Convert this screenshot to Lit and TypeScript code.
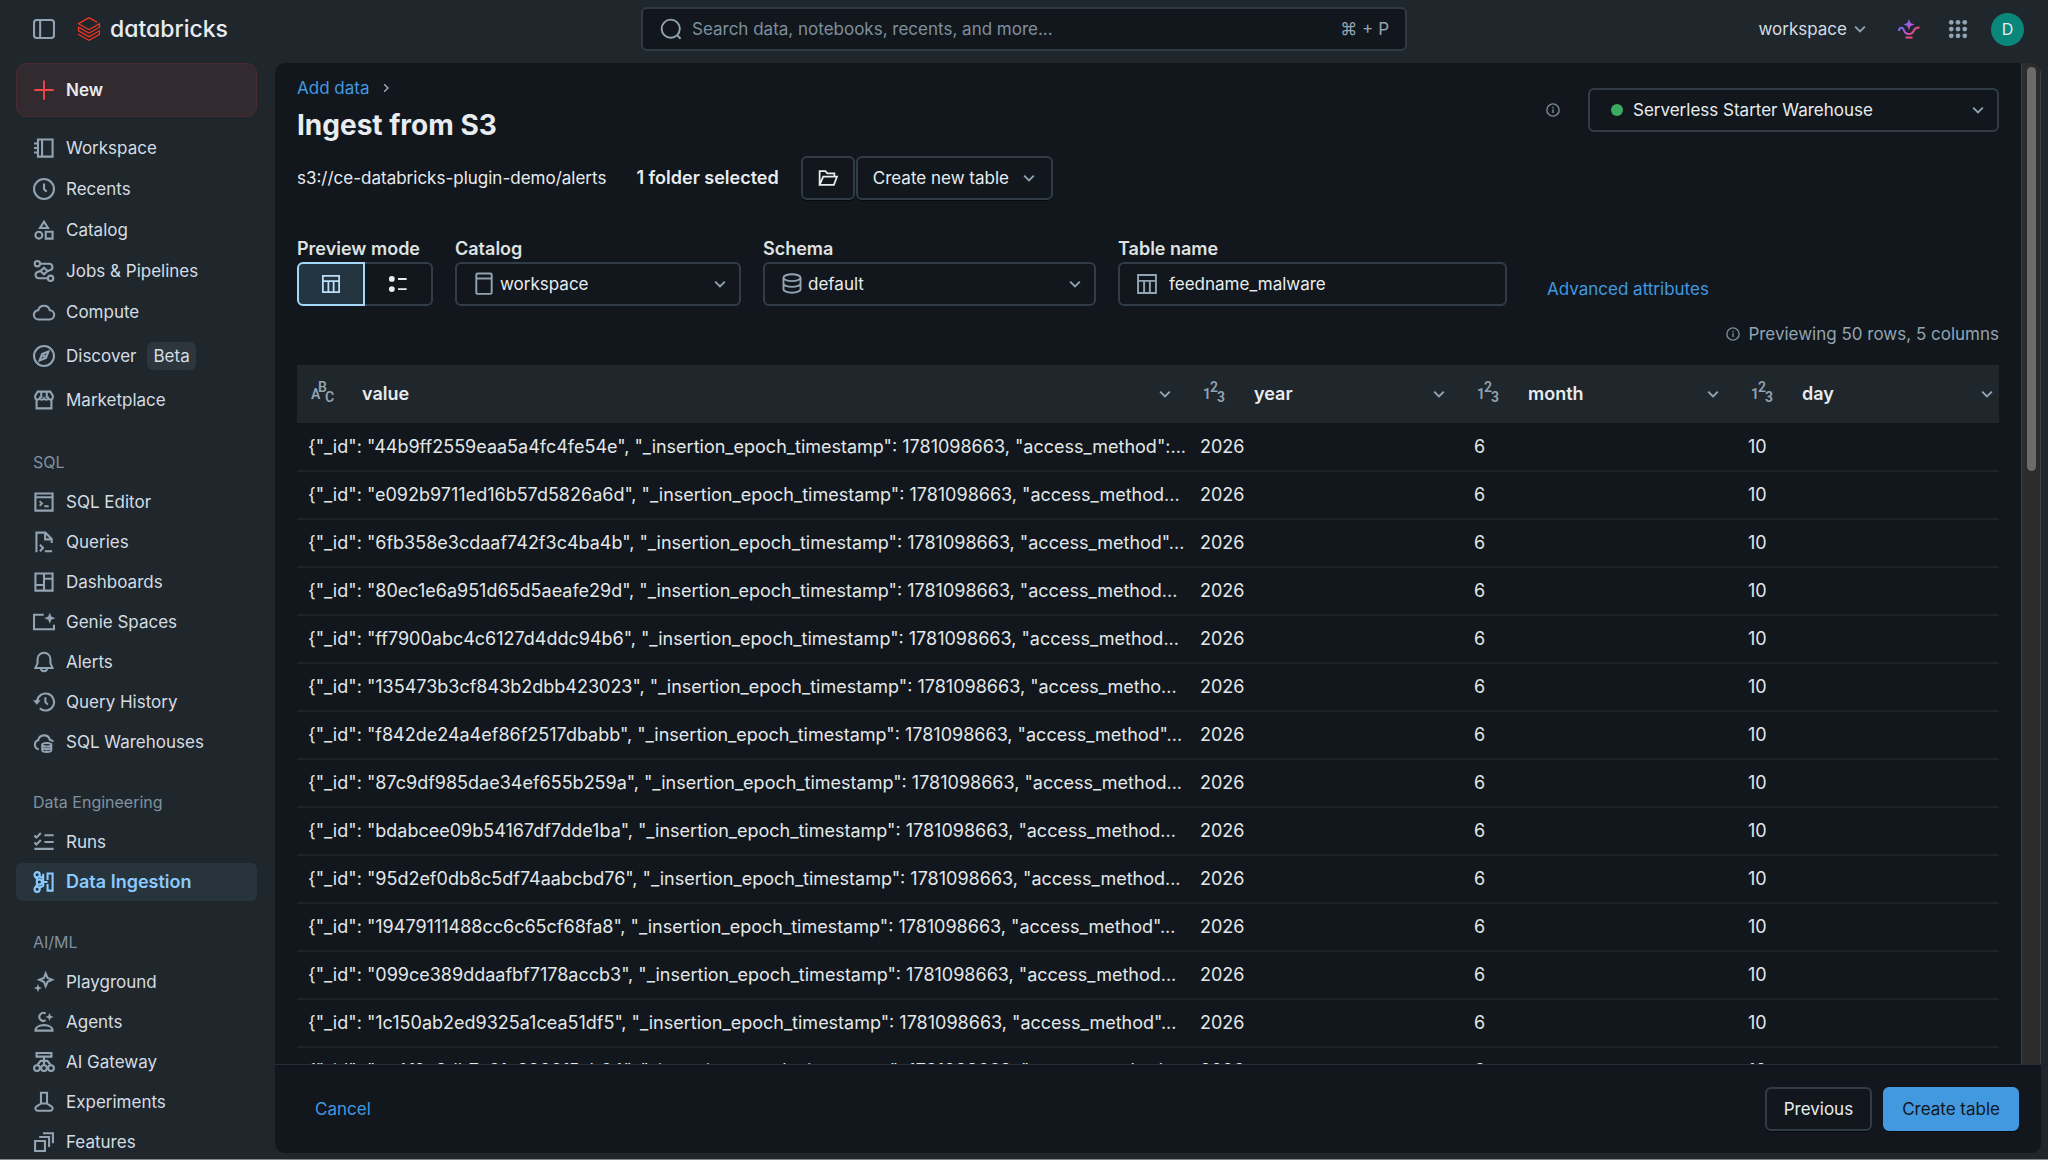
import { LitElement, html, css, svg, nothing } from "lit";
import { customElement, property, state } from "lit/decorators.js";
import { classMap } from "lit/directives/class-map.js";

const STAR = (cx: number, cy: number, r: number) => {
  const k = r * 0.28;
  return `M${cx} ${cy - r}L${cx + k} ${cy - k}L${cx + r} ${cy}L${cx + k} ${cy + k}L${cx} ${cy + r}L${cx - k} ${cy + k}L${cx - r} ${cy}L${cx - k} ${cy - k}Z`;
};

/* All glyphs are drawn on a 16 x 16 grid. */
const ICONS: Record<string, unknown> = {
  panel: svg`<rect x=".75" y="1.5" width="14.5" height="13" rx="2"/><path d="M5.2 1.5v13"/>`,
  plus: svg`<path d="M8 1v14M1 8h14"/>`,
  workspace: svg`<path d="M3.6 1.75h10.65v12.5H3.6zM6.6 1.75v12.5M.75 4.7h2.8M.75 8h2.8M.75 11.3h2.8"/>`,
  clock: svg`<circle cx="8" cy="8" r="7.25"/><path d="M8 4v4l1.9 2"/>`,
  catalog: svg`<path d="M8 1.9l2.9 4.6H5.1zM9.25 9.25h5v5h-5z"/><circle cx="4.25" cy="11.75" r="2.5"/>`,
  jobs: svg`<circle cx="3.2" cy="2.7" r="1.95"/><circle cx="12.8" cy="13.3" r="1.95"/><path d="M5.2 2.7h6.6a2.4 2.4 0 0 1 .9 4.6L10.5 8M10.8 13.3H4.2a2.4 2.4 0 0 1-.9-4.6L5.5 8"/><path d="M8 5.6L10.6 8 8 10.4 5.4 8z"/>`,
  cloud: svg`<path d="M4.1 13.4a3.35 3.35 0 0 1-.3-6.7 4.35 4.35 0 0 1 8.4 0 3.35 3.35 0 0 1-.3 6.7z"/>`,
  compass: svg`<circle cx="8" cy="8" r="7.25"/><path d="M11.2 4.8L9.4 9.4 4.8 11.2 6.6 6.6z"/><circle cx="8" cy="8" r=".6"/>`,
  market: svg`<path d="M3.4 1.9h9.2l1.8 3v1.3a1.7 1.7 0 0 1-3.2.6 1.8 1.8 0 0 1-3.2 0 1.8 1.8 0 0 1-3.2 0 1.7 1.7 0 0 1-3.2-.6V4.9zM6 2v4.5M10 2v4.5M2.6 8v6.1h10.8V8"/>`,
  sqlEditor: svg`<path d="M1.75 1.75h12.5v12.5H1.75zM1.75 4.6h12.5"/><path stroke-width="1.3" d="M4.8 7.4l1.8 1.7-1.8 1.7M8.2 11.1h3.2"/>`,
  query: svg`<path d="M2.5 15.4V1.2H9l4.6 4.6v3M8.8 1.2v4.9h4.8M5 10l2.3 2.3L5 14.7M8.6 14.7h5.3"/>`,
  dashboard: svg`<path d="M1.75 1.75h12.5v12.5H1.75zM8 1.75v12.5M8 5.6h6.25M1.75 10.2H8"/>`,
  genieSpace: svg`<path d="M7.8 2.75H.75v10.5h14.5V10"/><path fill="currentColor" stroke="none" d="${STAR(12.2, 5.2, 4)}"/>`,
  bell: svg`<path d="M8 1.25A4.7 4.7 0 0 0 3.3 6v3L1.8 12.3h12.4L12.7 9V6A4.7 4.7 0 0 0 8 1.25zM5.8 12.5a2.2 2.2 0 0 0 4.4 0"/>`,
  history: svg`<path d="M2.9 7.7a6.2 6.2 0 1 1 2 4.9M9 4.5v3.6l1.8 1.8"/><path fill="currentColor" stroke="none" d="M0 6.8h5.6L2.8 10z"/>`,
  warehouse: svg`<path d="M4.2 13.3a3.4 3.4 0 0 1-.4-6.6 4.35 4.35 0 0 1 8.5-.2c1 0 1.9.5 2.5 1.2"/><ellipse cx="10" cy="10" rx="3.3" ry="1.3"/><path d="M6.7 10v3.8c0 .8 1.4 1.4 3.3 1.4s3.3-.6 3.3-1.4V10M6.7 12.2c.6.7 1.8 1 3.3 1s2.7-.3 3.3-1"/>`,
  runs: svg`<path d="M8.3 3.1H15M8.3 8H15M1 13h14M1 3.3l1.5 1.5 3.2-3.3M1 8.3l1.5 1.5 3.2-3.3"/>`,
  ingest: svg`<circle cx="3" cy="2.7" r="1.9"/><circle cx="3" cy="13.3" r="1.9"/><circle cx="4.6" cy="8" r="1.9"/><path d="M4.6 3.8L7.4 5.2v5.6l-2.8 1.4M1.9 4.6l1.5 1.8M1.9 11.4l1.5-1.8M7.4 8h3.2M7.4 5.2V2"/><path d="M10.6 6.5V1.75h3.65v12.5H10.6V9.5"/>`,
  sparkle: svg`<path d="M9.2 1.8l1.4 3.3 3.3 1.3-3.3 1.4-1.4 3.3-1.3-3.3-3.3-1.4 3.3-1.3z"/><path fill="currentColor" stroke="none" d="${STAR(3.6, 12.4, 3)}"/>`,
  agent: svg`<path d="M9.2 1.9a2.9 2.9 0 1 0 0 4.8M1.75 14.25c0-2.5 2.8-4 6.25-4s6.25 1.5 6.25 4z"/><path fill="currentColor" stroke="none" d="${STAR(12, 4.3, 3)}"/>`,
  gateway: svg`<path d="M2.6 1.4h10.8v2.7H2.6zM8 4.1v6M8 7.2H5.5L3.3 10M8 7.2h2.5l2.2 2.8"/><circle cx="2.9" cy="12.4" r="2.1"/><circle cx="8" cy="12.4" r="2.1"/><circle cx="13.1" cy="12.4" r="2.1"/>`,
  flask: svg`<path d="M5.8 1.3h4.4v7.8l3.4 2.2c1.2.9.7 3-.8 3H3.2c-1.5 0-2-2.1-.8-3l3.4-2.2zM5.8 9.1h4.4"/>`,
  features: svg`<path d="M1.5 7.3h7.2v7.2H1.5zM4.5 4.4h7.2v7.2M7.2 1.6h7.3v7.3"/>`,
  search: svg`<circle cx="7.8" cy="7.8" r="6.6"/><path d="M12.4 12.4l2.6 2.7"/>`,
  chevron: svg`<path d="M3.7 5.9L8 10.2l4.3-4.3"/>`,
  crumb: svg`<path d="M5.9 3.7L10.2 8l-4.3 4.3"/>`,
  info: svg`<circle cx="8" cy="8" r="7"/><path d="M8 7.2v4.3M8 4.3v1.6"/>`,
  folder: svg`<path d="M1.3 13.5v-11h4.6l1.6 1.8h5.6v2.4M1.3 13.5l2.9-6.6h11l-2.5 6.6z"/>`,
  table: svg`<path d="M1.5 1.5h13v13h-13zM1.5 5.7h13M5.9 5.7v8.8M10.1 5.7v8.8"/>`,
  list: svg`<circle cx="3.5" cy="4.3" r="2.1" fill="currentColor" stroke="none"/><circle cx="3.5" cy="11.7" r="2.1" fill="currentColor" stroke="none"/><path d="M8 4.3h6.3M8 11.7h6.3"/>`,
  book: svg`<rect x="2.4" y=".4" width="11.2" height="14.8" rx="1"/><path d="M2.4 4h11.2"/>`,
  db: svg`<ellipse cx="8" cy="3.4" rx="6.2" ry="2.5"/><path d="M1.8 3.4v8.4c0 1.4 2.8 2.5 6.2 2.5s6.2-1.1 6.2-2.5V3.4M1.8 7.6c0 1.4 2.8 2.5 6.2 2.5s6.2-1.1 6.2-2.5"/>`,
  grid: svg`${[2.6, 8, 13.4].map((y) =>
    [2.6, 8, 13.4].map((x) => svg`<circle cx="${x}" cy="${y}" r="1.9" fill="currentColor" stroke="none"/>`)
  )}`,
};

const icon = (name: string, size = 22, width = 1.5) => html`<svg
  class="icon" width=${size} height=${size} viewBox="0 0 16 16" fill="none"
  stroke="currentColor" stroke-width=${width} aria-hidden="true">${ICONS[name]}</svg>`;

/* Column type mark: three small characters on staggered baselines. */
const typeMark = (a: string, b: string, c: string) => html`<svg
  class="icon" width="22" height="22" viewBox="0 0 22 22" fill="currentColor" aria-hidden="true"
  font-family="Roboto, sans-serif" font-size="14" font-weight="600"
  ><text x="0" y="16">${a}</text><text x="7" y="9">${b}</text><text x="14" y="19">${c}</text></svg>`;

interface NavItem { label: string; icon: string; badge?: string; active?: boolean }
interface NavGroup { title?: string; items: NavItem[] }

const NAV: NavGroup[] = [
  { items: [
    { label: "Workspace", icon: "workspace" },
    { label: "Recents", icon: "clock" },
    { label: "Catalog", icon: "catalog" },
    { label: "Jobs & Pipelines", icon: "jobs" },
    { label: "Compute", icon: "cloud" },
    { label: "Discover", icon: "compass", badge: "Beta" },
    { label: "Marketplace", icon: "market" },
  ] },
  { title: "SQL", items: [
    { label: "SQL Editor", icon: "sqlEditor" },
    { label: "Queries", icon: "query" },
    { label: "Dashboards", icon: "dashboard" },
    { label: "Genie Spaces", icon: "genieSpace" },
    { label: "Alerts", icon: "bell" },
    { label: "Query History", icon: "history" },
    { label: "SQL Warehouses", icon: "warehouse" },
  ] },
  { title: "Data Engineering", items: [
    { label: "Runs", icon: "runs" },
    { label: "Data Ingestion", icon: "ingest", active: true },
  ] },
  { title: "AI/ML", items: [
    { label: "Playground", icon: "sparkle" },
    { label: "Agents", icon: "agent" },
    { label: "AI Gateway", icon: "gateway" },
    { label: "Experiments", icon: "flask" },
    { label: "Features", icon: "features" },
  ] },
];

/* Record id and the part of the next key that the preview keeps. */
const ROWS: [string, string][] = [
  ["44b9ff2559eaa5a4fc4fe54e", 'access_method":'],
  ["e092b9711ed16b57d5826a6d", "access_method"],
  ["6fb358e3cdaaf742f3c4ba4b", 'access_method"'],
  ["80ec1e6a951d65d5aeafe29d", "access_method"],
  ["ff7900abc4c6127d4ddc94b6", "access_method"],
  ["135473b3cf843b2dbb423023", "access_metho"],
  ["f842de24a4ef86f2517dbabb", 'access_method"'],
  ["87c9df985dae34ef655b259a", "access_method"],
  ["bdabcee09b54167df7dde1ba", "access_method"],
  ["95d2ef0db8c5df74aabcbd76", "access_method"],
  ["19479111488cc6c65cf68fa8", 'access_method"'],
  ["099ce389ddaafbf7178accb3", "access_method"],
  ["1c150ab2ed9325a1cea51df5", 'access_method"'],
  ["ce4f0a8db7e61c3902f5ab64", "access_method"],
];

const base = css`
  *, *::before, *::after { box-sizing: border-box; }
  .icon { display: block; flex: none; overflow: visible; }
  a { color: inherit; text-decoration: none; }
  button, input, select { font: inherit; color: inherit; background: none; border: 0; margin: 0; padding: 0; }
  button { cursor: pointer; }
`;

@customElement("top-bar")
export class TopBar extends LitElement {
  static styles = [base, css`
    :host { display: grid; grid-template-columns: 1fr minmax(0, 766px) 1fr; align-items: center; padding: 7px 24px 12px; }
    .left, .right { display: flex; align-items: center; }
    .left { color: #92a4b3; gap: 22px; padding-left: 9px; }
    .right { justify-content: flex-end; color: #92a4b3; }
    .brand { display: flex; align-items: center; gap: 9px; color: #e8ecf0; font-size: 23px; font-weight: 500; line-height: 28px; font-feature-settings: "cv11"; }
    .search { display: flex; align-items: center; height: 44px; gap: 10px; padding: 0 16px 0 17px; border: 2px solid #2f3b44; border-radius: 6px; background: #11171c; color: #92a4b3; }
    .search input { flex: 1; min-width: 0; outline: none; }
    .search input::placeholder { color: #7e909e; opacity: 1; }
    .switch { display: flex; align-items: center; gap: 4px; color: #d5dce3; margin-right: 29px; }
    .switch .icon { color: #92a4b3; }
    .genie { margin-right: 28px; }
    .apps { margin-right: 23px; }
    .avatar { width: 33px; height: 33px; border-radius: 50%; background: #0a877b; color: #e8ecf0; font-size: 16px; }
  `];

  render() {
    return html`
      <div class="left">
        <button aria-label="Toggle sidebar">${icon("panel")}</button>
        <a class="brand" href="#">
          <svg class="icon" width="24" height="24" viewBox="0 0 24 24" fill="#ff3621" aria-hidden="true">
            <path d="M.95 14.184L12 20.403l9.919-5.55v2.21L12 22.662l-10.484-5.96-.565.308v.77L12 24l11.05-6.218v-4.317l-.515-.309L12 19.118l-9.867-5.653v-2.21L12 16.805l11.05-6.218V6.32l-.515-.308L12 11.974 2.647 6.681 12 1.388l7.76 4.368.668-.411v-.566L12 0 .95 6.27v.72L12 13.207l9.919-5.55v2.26L12 15.52 1.516 9.56l-.565.308Z"/>
          </svg>
          <span>databricks</span>
        </a>
      </div>
      <label class="search">
        ${icon("search", 22, 1.4)}
        <input type="text" placeholder="Search data, notebooks, recents, and more..." aria-label="Search" />
        <span>⌘ + P</span>
      </label>
      <div class="right">
        <button class="switch">workspace ${icon("chevron", 18, 1.6)}</button>
        <button class="genie" aria-label="Genie">
          <svg class="icon" width="22" height="20" viewBox="0 0 22 20" fill="none" stroke="url(#g)" stroke-width="2" aria-hidden="true">
            <defs><linearGradient id="g" gradientUnits="userSpaceOnUse" x1="1" y1="2" x2="20" y2="19">
              <stop offset="0" stop-color="#3d7df5"/><stop offset=".45" stop-color="#b455e0"/><stop offset=".8" stop-color="#f5486b"/><stop offset="1" stop-color="#ff5a3c"/>
            </linearGradient></defs>
            <path d="M1 12c0-4.300 4-4.300 5-.5.7 2.300 2.300 3.500 5 3.500s4-1.300 5-3.700c.9-2.300 2-2.800 5.500-2.800M7.500 18.500h7"/>
            <path fill="url(#g)" stroke="none" d="${STAR(11, 5.5, 5.5)}"/>
          </svg>
        </button>
        <button class="apps" aria-label="Apps">${icon("grid", 20)}</button>
        <button class="avatar" aria-label="Account">D</button>
      </div>
    `;
  }
}

@customElement("side-nav")
export class SideNav extends LitElement {
  static styles = [base, css`
    :host { display: block; overflow: hidden; padding: 0 18px 0 16px; color: #d5dce3; }
    .new { display: flex; align-items: center; gap: 11px; width: 100%; height: 54px; padding: 0 16px; border: 1px solid #4a2b31; border-radius: 10px; background: #322a2f; color: #e8ecf0; font-weight: 600; }
    .new .icon { color: #f0464a; }
    ul { list-style: none; margin: 0; padding: 0; display: grid; gap: 2px; }
    .main { margin: 11px 0 24px; }
    .main a { min-height: 39px; }
    .group { margin-bottom: 22px; }
    h2 { margin: 0 0 2px; padding: 0 17px; font-size: 16px; font-weight: 400; line-height: 38px; color: #7f919f; }
    a { display: flex; align-items: center; gap: 11px; min-height: 38px; padding: 0 17px; border-radius: 6px; }
    a .icon { color: #92a4b3; }
    .badge { margin: 9px 0 8px; padding: 0 6px; border-radius: 6px; background: #2e363d; line-height: 28px; }
    .active { background: #27343c; color: #8acaff; font-size: 18px; font-weight: 600; }
    .active .icon { color: #8acaff; }
  `];

  render() {
    return html`
      <button class="new">${icon("plus", 22, 1.4)} New</button>
      <nav aria-label="Main">
        ${NAV.map((g) => html`
          <div class=${g.title ? "group" : "main"}>
            ${g.title ? html`<h2>${g.title}</h2>` : nothing}
            <ul>
              ${g.items.map((i) => html`<li><a href="#" class=${classMap({ active: !!i.active })}>
                ${icon(i.icon)}<span>${i.label}</span>
                ${i.badge ? html`<span class="badge">${i.badge}</span>` : nothing}
              </a></li>`)}
            </ul>
          </div>`)}
      </nav>
    `;
  }
}

@customElement("icon-select")
export class IconSelect extends LitElement {
  @property() label = "";
  @property() value = "";
  @property() glyph = "";
  @property({ type: Boolean, attribute: "label-hidden" }) labelHidden = false;

  static styles = [base, css`
    :host { display: grid; gap: 1px; }
    label { font-size: 18px; line-height: 24px; font-weight: 600; color: #dfe2e3; }
    .box { display: grid; grid-template-columns: auto 1fr auto; align-items: center; height: 44px; border: 2px solid #303d46; border-radius: 6px; color: #92a4b3; }
    select { grid-area: 1 / 1 / 2 / 4; width: 100%; height: 100%; padding: 0 44px 0 43px; appearance: none; outline: none; color: #e8ecf0; }
    .lead, .tail { grid-row: 1; pointer-events: none; }
    .lead { grid-column: 1; margin-left: 16px; }
    .tail { grid-column: 3; margin-right: 10px; }
    .dot { width: 12px; height: 12px; margin: 0 5px; border-radius: 50%; background: #3caa60; }
  `];

  render() {
    return html`
      ${this.labelHidden ? nothing : html`<label for="s">${this.label}</label>`}
      <div class="box">
        <select id="s" aria-label=${this.label}><option>${this.value}</option></select>
        <span class="lead">${this.glyph === "dot" ? html`<div class="dot"></div>` : icon(this.glyph, 22, 1.4)}</span>
        <span class="tail">${icon("chevron", 18, 1.6)}</span>
      </div>
    `;
  }
}

@customElement("preview-table")
export class PreviewTable extends LitElement {
  static styles = [base, css`
    :host { display: block; overflow: hidden; font-size: 18px; }
    table { width: calc(100% + 12px); table-layout: fixed; border-collapse: collapse; }
    .int { width: 274px; }
    th { height: 58px; padding: 0 19px 0 14px; background: #1f272d; text-align: left; font-weight: 600; color: #e8ecf0; }
    .head { display: flex; align-items: center; color: #92a4b3; }
    .name { flex: 1; margin-left: 29px; color: #e8ecf0; }
    .head button { margin-right: -4px; }
    td { height: 48px; padding: 0 4px 0 11px; border-bottom: 2px solid #1c242a; color: #e3e7ea; white-space: nowrap; }
  `];

  render() {
    const cols = ["value", "year", "month", "day"];
    return html`
      <table>
        <thead><tr>
          ${cols.map((c, i) => html`<th scope="col" class=${i ? "int" : "text"}>
            <div class="head">${i ? typeMark("1", "2", "3") : typeMark("A", "B", "C")}<span class="name">${c}</span>
              <button aria-label="Column options">${icon("chevron", 18, 1.7)}</button></div>
          </th>`)}
        </tr></thead>
        <tbody>
          ${ROWS.map(([id, tail]) => html`<tr>
            <td>${`{"_id": "${id}", "_insertion_epoch_timestamp": 1781098663, "${tail}...`}</td>
            <td>2026</td><td>6</td><td>10</td>
          </tr>`)}
        </tbody>
      </table>
    `;
  }
}

@customElement("app-root")
export class AppRoot extends LitElement {
  @state() private mode = "table";

  static styles = [base, css`
    :host { display: grid; grid-template-rows: auto 1fr; height: 100vh; box-sizing: border-box; overflow: hidden; background: #1f272d; border-bottom: 1px solid #84888c; color: #e8ecf0; font-family: Inter, "Noto Sans", sans-serif; font-size: 17px; line-height: 24px; }
    .body { display: grid; grid-template-columns: 275px minmax(0, 1fr); min-height: 0; }
    side-nav { min-height: 0; }
    main { display: grid; grid-template-rows: minmax(0, 1fr) auto; min-height: 0; margin: 0 7px 6px 0; border-radius: 10px; background: #11171c; overflow: hidden; }
    .view { display: grid; grid-template-columns: minmax(0, 1fr) auto; min-height: 0; }
    .scroll { min-height: 0; overflow-y: auto; scrollbar-width: none; padding: 13px 22px 0 22px; }
    .track { width: 20px; padding: 4px 4px 0 5px; background: #2c2c2c; border-left: 1px solid #3e4042; border-right: 1px solid #3e4042; }
    .thumb { height: 40.5%; border-radius: 6px; background: #6b6b6b; }
    .head { display: flex; align-items: center; justify-content: space-between; }
    .crumbs { display: flex; align-items: center; gap: 10px; color: #92a4b3; }
    .link { color: #4299e0; }
    h1 { margin: 6px 0 0; font-size: 28px; line-height: 38px; font-weight: 700; }
    .compute { display: flex; align-items: center; gap: 28px; color: #7b8b98; }
    .compute icon-select { width: 411px; }
    .source { display: flex; align-items: center; margin-top: 12px; gap: 22px; }
    .path { margin-right: 8px; }
    .source strong { font-size: 18px; font-weight: 600; }
    .actions { display: flex; gap: 1px; }
    .btn { display: flex; align-items: center; height: 44px; padding: 0 15px; border: 2px solid #303d46; border-radius: 6px; box-shadow: 0 1px 0 #070b0e; }
    .btn .chev { color: #92a4b3; margin: 0 -2px 0 11px; }
    .form { display: flex; align-items: flex-end; gap: 22px; margin-top: 37px; }
    fieldset { margin: 0; padding: 0; border: 0; }
    legend, .field > label { display: block; padding: 0; margin-bottom: 1px; font-size: 18px; font-weight: 600; color: #dfe2e3; }
    .segments { display: flex; height: 44px; }
    .segments label { display: grid; place-items: center; width: 68px; border: 2px solid #303d46; border-radius: 0 6px 6px 0; border-left: 0; }
    .segments label:first-child { border-radius: 6px 0 0 6px; }
    .segments .on { border: 2px solid #a5d8f8; background: #243541; color: #b9e1fb; }
    .segments input { position: absolute; opacity: 0; width: 1px; height: 1px; }
    .catalog { width: 286px; }
    .schema { width: 333px; }
    .field { width: 389px; }
    .input { display: flex; align-items: center; gap: 11px; height: 44px; padding: 0 16px; border: 2px solid #303d46; border-radius: 6px; color: #92a4b3; }
    .input input { flex: 1; min-width: 0; outline: none; color: #e8ecf0; }
    .advanced { margin: 0 0 5px 18px; }
    .note { display: flex; align-items: center; justify-content: flex-end; gap: 8px; margin: 16px 0 19px; color: #92a4b3; }
    .note .icon { color: #7b8b98; }
    footer { display: flex; align-items: center; gap: 11px; padding: 22px; border-top: 1px solid #242e36; }
    footer .btn { padding: 0 17px; }
    .cancel { margin: 0 auto 0 18px; }
    .btn.primary { border-color: #4299e0; background: #4299e0; color: #11171c; }
  `];

  private segment(id: string, label: string) {
    const on = this.mode === id;
    return html`<label class=${classMap({ on })}>
      <input type="radio" name="mode" aria-label=${label} .checked=${on} @change=${() => (this.mode = id)} />
      ${icon(id, id === "table" ? 20 : 22, 1.4)}
    </label>`;
  }

  render() {
    return html`
      <top-bar></top-bar>
      <div class="body">
        <side-nav></side-nav>
        <main>
          <div class="view">
            <div class="scroll">
              <div class="head">
                <div>
                  <div class="crumbs"><a class="link" href="#">Add data</a>${icon("crumb", 14, 1.8)}</div>
                  <h1>Ingest from S3</h1>
                </div>
                <div class="compute">
                  ${icon("info", 14, 1.6)}
                  <icon-select label="SQL warehouse" label-hidden value="Serverless Starter Warehouse" glyph="dot"></icon-select>
                </div>
              </div>
              <div class="source">
                <span class="path">s3://ce-databricks-plugin-demo/alerts</span>
                <strong>1 folder selected</strong>
                <div class="actions">
                  <button class="btn" aria-label="Browse files">${icon("folder", 20, 1.4)}</button>
                  <button class="btn">Create new table <span class="chev">${icon("chevron", 18, 1.6)}</span></button>
                </div>
              </div>
              <div class="form">
                <fieldset>
                  <legend>Preview mode</legend>
                  <div class="segments">${this.segment("table", "Table")}${this.segment("list", "List")}</div>
                </fieldset>
                <icon-select class="catalog" label="Catalog" value="workspace" glyph="book"></icon-select>
                <icon-select class="schema" label="Schema" value="default" glyph="db"></icon-select>
                <div class="field">
                  <label for="table-name">Table name</label>
                  <div class="input">${icon("table", 22, 1.4)}<input id="table-name" type="text" .value=${"feedname_malware"} /></div>
                </div>
                <a class="link advanced" href="#">Advanced attributes</a>
              </div>
              <div class="note">${icon("info", 14, 1.6)}<span>Previewing 50 rows, 5 columns</span></div>
              <preview-table></preview-table>
            </div>
            <div class="track"><div class="thumb"></div></div>
          </div>
          <footer>
            <button class="link cancel">Cancel</button>
            <button class="btn">Previous</button>
            <button class="btn primary">Create table</button>
          </footer>
        </main>
      </div>
    `;
  }
}
